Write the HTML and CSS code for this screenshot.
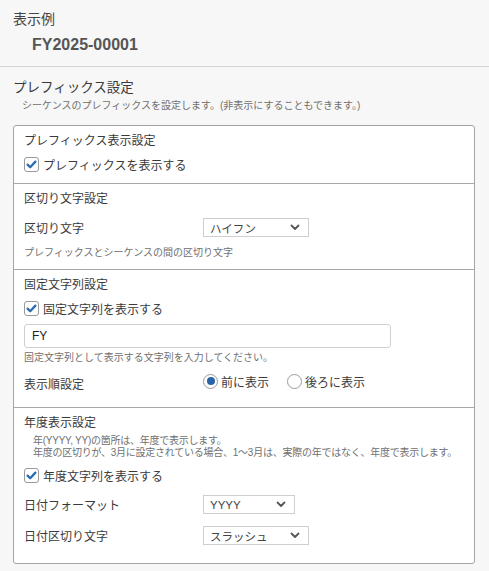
FILE: index.html
```html
<!DOCTYPE html>
<html lang="ja">
<head>
<meta charset="utf-8">
<title>プレフィックス設定</title>
<link rel="stylesheet" href="styles.css">
</head>
<body>
<header class="preview">
  <div class="preview-label">表示例</div>
  <div class="preview-value">FY2025-00001</div>
</header>

<main class="settings">
  <h2 class="settings-title">プレフィックス設定</h2>
  <p class="settings-desc">シーケンスのプレフィックスを設定します。(非表示にすることもできます。)</p>

  <div class="panel">
    <section class="group g1">
      <h3 class="group-title">プレフィックス表示設定</h3>
      <label class="check-row">
        <span class="checkbox"><svg viewBox="0 0 15 15" width="15" height="15"><path d="M3.6 7.6 L6.2 10.2 L11.4 4.6" fill="none" stroke="#2b6cb3" stroke-width="2.3" stroke-linecap="round" stroke-linejoin="round"/></svg></span>
        <span>プレフィックスを表示する</span>
      </label>
    </section>

    <section class="group g2">
      <h3 class="group-title">区切り文字設定</h3>
      <div class="field-row">
        <span class="field-label">区切り文字</span>
        <div class="select w106"><span>ハイフン</span><svg viewBox="0 0 10 7" width="10" height="7"><path d="M1.5 1.5 L5 5 L8.5 1.5" fill="none" stroke="#555" stroke-width="1.8" stroke-linecap="round" stroke-linejoin="round"/></svg></div>
      </div>
      <p class="hint">プレフィックスとシーケンスの間の区切り文字</p>
    </section>

    <section class="group g3">
      <h3 class="group-title">固定文字列設定</h3>
      <label class="check-row">
        <span class="checkbox"><svg viewBox="0 0 15 15" width="15" height="15"><path d="M3.6 7.6 L6.2 10.2 L11.4 4.6" fill="none" stroke="#2b6cb3" stroke-width="2.3" stroke-linecap="round" stroke-linejoin="round"/></svg></span>
        <span>固定文字列を表示する</span>
      </label>
      <div class="text-input">FY</div>
      <p class="hint hint-tight">固定文字列として表示する文字列を入力してください。</p>
      <div class="field-row radio-row">
        <span class="field-label low">表示順設定</span>
        <div class="radios">
          <label class="radio-item"><span class="radio on"><span class="dot"></span></span><span>前に表示</span></label>
          <label class="radio-item"><span class="radio"></span><span>後ろに表示</span></label>
        </div>
      </div>
    </section>

    <section class="group g4">
      <h3 class="group-title">年度表示設定</h3>
      <p class="group-desc">年(YYYY, YY)の箇所は、年度で表示します。<br>年度の区切りが、3月に設定されている場合、1〜3月は、実際の年ではなく、年度で表示します。</p>
      <label class="check-row">
        <span class="checkbox"><svg viewBox="0 0 15 15" width="15" height="15"><path d="M3.6 7.6 L6.2 10.2 L11.4 4.6" fill="none" stroke="#2b6cb3" stroke-width="2.3" stroke-linecap="round" stroke-linejoin="round"/></svg></span>
        <span>年度文字列を表示する</span>
      </label>
      <div class="field-row r1">
        <span class="field-label">日付フォーマット</span>
        <div class="select w92"><span>YYYY</span><svg viewBox="0 0 10 7" width="10" height="7"><path d="M1.5 1.5 L5 5 L8.5 1.5" fill="none" stroke="#555" stroke-width="1.8" stroke-linecap="round" stroke-linejoin="round"/></svg></div>
      </div>
      <div class="field-row r2">
        <span class="field-label">日付区切り文字</span>
        <div class="select w106"><span>スラッシュ</span><svg viewBox="0 0 10 7" width="10" height="7"><path d="M1.5 1.5 L5 5 L8.5 1.5" fill="none" stroke="#555" stroke-width="1.8" stroke-linecap="round" stroke-linejoin="round"/></svg></div>
      </div>
    </section>
  </div>
</main>
</body>
</html>
```

FILE: styles.css
```css
* { box-sizing: border-box; }

body {
  margin: 0;
  background: #f7f7f7;
  color: #3a3a3a;
  font-family: "Liberation Sans", "Noto Sans CJK JP", sans-serif;
  font-size: 12px;
}

.preview {
  padding: 10px 0 10px 13px;
  border-bottom: 1px solid #d6d6d6;
}

.preview-label {
  font-size: 14px;
  line-height: 18px;
  color: #444;
}

.preview-value {
  margin-top: 6px;
  padding-left: 19px;
  font-size: 16px;
  line-height: 22px;
  font-weight: 700;
  color: #555;
}

.settings {
  padding: 11px 14px 0 13px;
}

.settings-title {
  margin: 0;
  font-size: 13.5px;
  font-weight: 400;
  line-height: 20px;
  color: #3a3a3a;
}

.settings-desc {
  margin: 1px 0 0 9px;
  font-size: 10px;
  line-height: 14px;
  color: #707070;
}

.panel {
  margin-top: 12px;
  background: #fff;
  border: 1px solid #a3a3a3;
  border-radius: 3px;
}

.group {
  padding: 7px 10px 9px;
}

.group + .group {
  border-top: 1px solid #a8a8a8;
}

.group-title {
  margin: 0;
  font-size: 12px;
  font-weight: 400;
  line-height: 16px;
  color: #3a3a3a;
}

.check-row {
  display: flex;
  align-items: center;
  gap: 4px;
  height: 20px;
  margin-top: 5px;
  font-size: 12px;
}

.checkbox {
  width: 15px;
  height: 15px;
  border: 1px solid #9a9a9a;
  border-radius: 3px;
  background: #fff;
  display: flex;
  align-items: center;
  justify-content: center;
  overflow: hidden;
}

.checkbox svg { display: block; flex: none; }

.field-row {
  display: flex;
  align-items: center;
  margin-top: 9px;
  min-height: 20px;
}

.field-label {
  width: 179px;
  flex: none;
  font-size: 12px;
  line-height: 20px;
  padding-top: 3px;
}

.select {
  height: 19px;
  border: 1px solid #cfcfcf;
  background: #fff;
  display: flex;
  align-items: center;
  justify-content: space-between;
  padding: 0 8px 0 6px;
  font-size: 11.5px;
  color: #444;
}

.select svg { display: block; }

.w106 { width: 106px; }
.w92 { width: 92px; }

.hint {
  margin: 7px 0 0;
  font-size: 10px;
  line-height: 14px;
  color: #707070;
}

.hint-tight { margin-top: 3px; }

.text-input {
  margin-top: 6px;
  width: 367px;
  height: 24px;
  border: 1px solid #cfcfcf;
  border-radius: 3px;
  padding: 0 7px;
  font-size: 12px;
  line-height: 22px;
  color: #222;
}

.radio-row {
  margin-top: 6px;
  align-items: flex-start;
  padding-bottom: 3px;
}

.field-label.low { padding-top: 4px; }

.radios {
  display: flex;
  align-items: center;
  gap: 18px;
  height: 20px;
}

.radio-item {
  display: flex;
  align-items: center;
  gap: 3px;
  font-size: 12px;
}

.radio {
  width: 15px;
  height: 15px;
  border: 1px solid #9a9a9a;
  border-radius: 50%;
  background: #fff;
  display: flex;
  align-items: center;
  justify-content: center;
}

.radio .dot {
  width: 8px;
  height: 8px;
  border-radius: 50%;
  background: #2a63a6;
}

.g4 { padding-top: 7px; padding-bottom: 16px; }

.group-desc {
  margin: 4px 0 0 9px;
  font-size: 10px;
  line-height: 12px;
  letter-spacing: -0.25px;
  white-space: nowrap;
  color: #707070;
}

.g4 .check-row { margin-top: 6px; }
.g4 .r1 { margin-top: 8px; }
.g4 .r2 { margin-top: 8px; }
```
